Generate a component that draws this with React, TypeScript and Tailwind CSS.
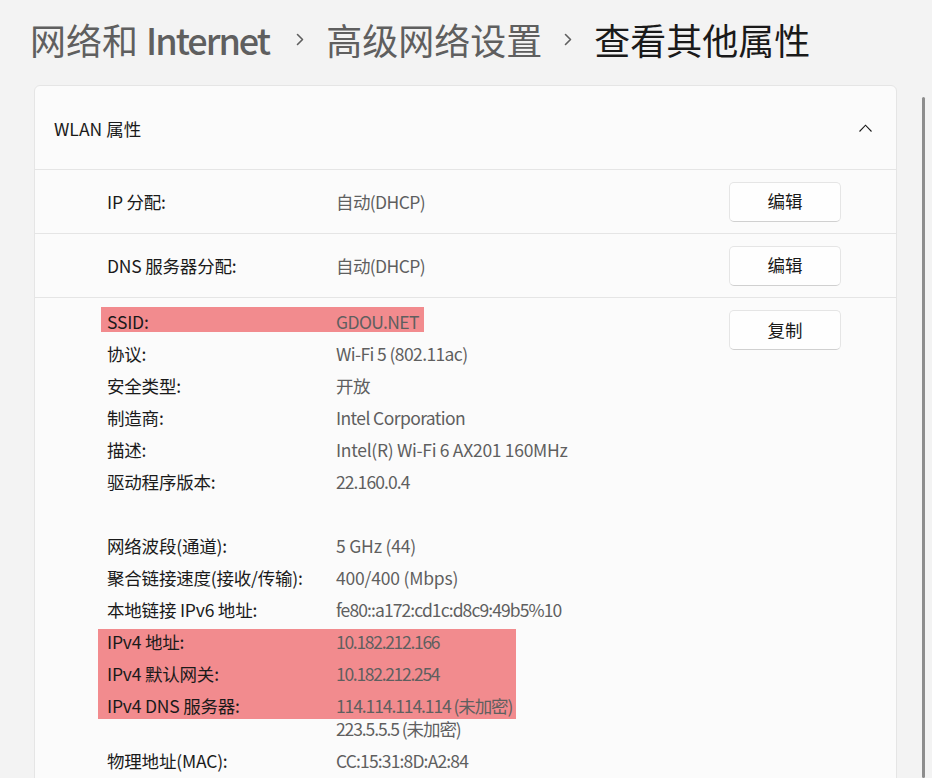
import React from "react";

const FONT = "font-['Noto_Sans_CJK_SC',sans-serif]";

function Chevron() {
  return (
    <svg width="8" height="13" viewBox="0 0 8 13" className="shrink-0">
      <polyline points="1.5,1.5 6.5,6.5 1.5,11.5" fill="none" stroke="#5f5f5f" strokeWidth="1.6" strokeLinecap="round" strokeLinejoin="round" />
    </svg>
  );
}

function Btn({ children }: { children: React.ReactNode }) {
  return (
    <button className="w-[112px] h-[40px] rounded-[5px] bg-[#fefefe] border border-[#e5e5e5] border-b-[#d0d0d0] text-[17.5px] text-[#1a1a1a] flex items-center justify-center">
      {children}
    </button>
  );
}

function Prop({ label, value, vt = "tracking-[-0.6px]" }: { label: string; value: React.ReactNode; vt?: string }) {
  return (
    <div className="flex leading-[23px]">
      <div className="w-[229px] shrink-0 text-[#1a1a1a] tracking-[-0.2px]">{label}</div>
      <div className={`text-[#5f5f5f] ${vt}`}>{value}</div>
    </div>
  );
}

export default function App() {
  return (
    <div className={`${FONT} relative h-[778px] w-[932px] overflow-hidden bg-[#f3f3f3] text-[17.5px]`}>
      <div className="h-[85px] pt-[17px] pl-[30px] flex items-start">
        <div className="flex items-center h-[44px] text-[36px] leading-[44px]">
          <span className="text-[#5f5f5f]">
            网络和 <span className="font-medium tracking-[-2px]">Internet</span>
          </span>
          <span className="ml-[27px] mr-[22px] flex items-center"><Chevron /></span>
          <span className="text-[#5f5f5f]">高级网络设置</span>
          <span className="ml-[22px] mr-[22px] flex items-center"><Chevron /></span>
          <span className="text-[#1a1a1a]">查看其他属性</span>
        </div>
      </div>

      <div className="ml-[34px] w-[863px] rounded-[6px] border border-[#e5e5e5] bg-[#fbfbfb] pb-[20px]">
        <div className="h-[83px] flex items-center justify-between pl-[19px] pr-[24px]">
          <span className="text-[#1a1a1a] pt-[3px]">WLAN 属性</span>
          <svg width="13" height="8" viewBox="0 0 13 8">
            <polyline points="0.5,7.5 6.5,1.2 12.5,7.5" fill="none" stroke="#1a1a1a" strokeWidth="1.1" />
          </svg>
        </div>

        <div className="h-[64px] border-t border-[#e5e5e5] flex items-center pl-[72px] pr-[55px]">
          <div className="w-[229px] shrink-0 text-[#1a1a1a] pt-[1px] tracking-[-0.2px]">IP 分配:</div>
          <div className="flex-1 text-[#5f5f5f] pt-[1px] tracking-[-0.6px]">自动(DHCP)</div>
          <Btn>编辑</Btn>
        </div>

        <div className="h-[64px] border-t border-[#e5e5e5] flex items-center pl-[72px] pr-[55px]">
          <div className="w-[229px] shrink-0 text-[#1a1a1a] pt-[1px] tracking-[-0.2px]">DNS 服务器分配:</div>
          <div className="flex-1 text-[#5f5f5f] pt-[1px] tracking-[-0.6px]">自动(DHCP)</div>
          <Btn>编辑</Btn>
        </div>

        <div className="border-t border-[#e5e5e5] pt-[12px] flex pl-[72px] pr-[55px]">
          <div className="flex-1 flex flex-col gap-[9px]">
            <div className="relative">
              <div className="absolute left-[-6px] top-[-3.5px] w-[323px] h-[25px] bg-[#f28b8e]" />
              <div className="relative">
                <Prop label="SSID:" value="GDOU.NET" />
              </div>
            </div>
            <Prop label="协议:" value="Wi-Fi 5 (802.11ac)" />
            <Prop label="安全类型:" value="开放" />
            <Prop label="制造商:" value="Intel Corporation" />
            <Prop label="描述:" value="Intel(R) Wi-Fi 6 AX201 160MHz" vt="tracking-[-0.3px]" />
            <Prop label="驱动程序版本:" value="22.160.0.4" vt="tracking-[-0.9px]" />
            <div className="h-[23px]" />
            <Prop label="网络波段(通道):" value="5 GHz (44)" vt="tracking-[-0.2px]" />
            <Prop label="聚合链接速度(接收/传输):" value="400/400 (Mbps)" vt="tracking-[-0.2px]" />
            <Prop label="本地链接 IPv6 地址:" value="fe80::a172:cd1c:d8c9:49b5%10" vt="tracking-[-0.9px]" />
            <div className="relative">
              <div className="absolute left-[-9px] top-[-1.5px] w-[418px] h-[90px] bg-[#f28b8e]" />
              <div className="relative flex flex-col gap-[9px]">
                <Prop label="IPv4 地址:" value="10.182.212.166" vt="tracking-[-1.3px]" />
                <Prop label="IPv4 默认网关:" value="10.182.212.254" vt="tracking-[-1.3px]" />
                <Prop
                  label="IPv4 DNS 服务器:"
                  vt="tracking-[-1.1px]"
                  value={
                    <div className="flex flex-col">
                      <span>114.114.114.114 (未加密)</span>
                      <span>223.5.5.5 (未加密)</span>
                    </div>
                  }
                />
              </div>
            </div>
            <Prop label="物理地址(MAC):" value="CC:15:31:8D:A2:84" vt="tracking-[-0.85px]" />
          </div>
          <div className="shrink-0">
            <Btn>复制</Btn>
          </div>
        </div>
      </div>

      <div className="absolute right-[7px] top-[97px] bottom-0 w-[3px] rounded-full bg-[#8d8d8d]" />
    </div>
  );
}
